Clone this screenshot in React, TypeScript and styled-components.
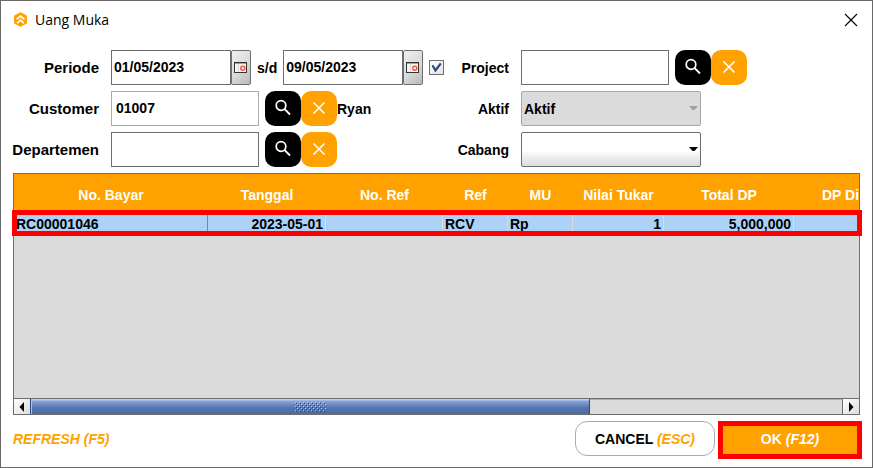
import React from "react";
import styled, { createGlobalStyle, css } from "styled-components";

const ORANGE = "#ffa200";
const RED = "#ff0000";
const LINE = "#6e6e6e";

const GlobalStyle = createGlobalStyle`
  *, *::before, *::after { box-sizing: border-box; }
  body {
    margin: 0;
    background: #fff;
    color: #000;
    font: bold 14px/18px "Liberation Sans", Arial, sans-serif;
  }
  button, input, select { font: inherit; color: inherit; margin: 0; }
`;

const Dialog = styled.main`
  min-height: 100vh;
  display: flex;
  flex-direction: column;
  border: 1px solid #696969;
  background: #fff;
`;

const TitleBar = styled.header`
  display: flex;
  align-items: center;
  gap: 7px;
  height: 37px;
  padding: 0 14px 0 12px;
`;

const Title = styled.h1`
  flex: 1;
  margin: 0;
  font: normal 14px/20px "Open Sans", "Noto Sans", sans-serif;
`;

const CloseButton = styled.button`
  display: flex;
  padding: 0;
  border: 0;
  background: none;
`;

const Filters = styled.form`
  display: grid;
  grid-template-columns: 86px 333px 53px 1fr;
  column-gap: 12px;
  row-gap: 6px;
  padding: 12px 12px 6px;
`;

const Label = styled.label<{ $large?: boolean }>`
  align-self: center;
  justify-self: end;
  white-space: nowrap;
  font-size: ${(p) => (p.$large ? "15px" : "14px")};
`;

const Fields = styled.div<{ $gap?: number }>`
  display: flex;
  align-items: center;
  height: 35px;
  gap: ${(p) => p.$gap ?? 0}px;
`;

const TextInput = styled.input<{ $muted?: boolean; $date?: boolean }>`
  width: ${(p) => (p.$date ? "120px" : "148px")};
  height: 35px;
  padding: 0 ${(p) => (p.$date ? "2px" : "4px")} 2px;
  border: 1px solid ${(p) => (p.$muted ? "#ababab" : LINE)};
  border-radius: 0;
  background: #fff;
  outline: 0;
`;

const DateField = styled.div`
  display: flex;
`;

const CalendarButton = styled.button`
  display: flex;
  align-items: center;
  justify-content: center;
  width: 20px;
  height: 35px;
  padding: 0;
  border: 1px solid ${LINE};
  border-radius: 2px;
  background: linear-gradient(135deg, #efefef, #d9d9d9 55%, #b9b9b9);
`;

const CheckWrap = styled.span`
  position: relative;
  display: flex;
  svg {
    position: absolute;
    inset: 0;
    pointer-events: none;
  }
`;

const CheckBox = styled.input`
  appearance: none;
  width: 15px;
  height: 15px;
  border: 1px solid ${LINE};
  background: linear-gradient(135deg, #fff, #e4e4e4);
  & + svg { visibility: hidden; }
  &:checked + svg { visibility: visible; }
`;

const ButtonPair = styled.div`
  display: flex;
  margin-left: 6px;
`;

const SquareButton = styled.button<{ $clear?: boolean }>`
  display: flex;
  align-items: center;
  justify-content: center;
  width: 36px;
  height: 35px;
  padding: 0 0 2px;
  border: 0;
  border-radius: 10px;
  background: ${(p) => (p.$clear ? ORANGE : "#000")};
`;

const SelectWrap = styled.div`
  position: relative;
  display: flex;
  svg {
    position: absolute;
    right: 3px;
    top: 15px;
    pointer-events: none;
  }
`;

const Select = styled.select`
  appearance: none;
  width: 180px;
  height: 35px;
  padding: 0 20px 0 2px;
  border: 1px solid ${LINE};
  border-radius: 2px;
  background: linear-gradient(#fff 55%, #f0f0f0 70%, #dcdcdc);
  opacity: 1;
  &:disabled {
    border-color: #a8a8a8;
    background: #dbdbdb;
    color: #000;
  }
`;

const GridArea = styled.section`
  position: relative;
  flex: 1;
  display: flex;
  margin: 0 12px;
`;

const GridPanel = styled.div`
  flex: 1;
  min-width: 0;
  display: flex;
  flex-direction: column;
  border: 1px solid ${LINE};
  background: #dbdbdb;
`;

const TableClip = styled.div`
  flex: 1;
  overflow: hidden;
`;

const Table = styled.table`
  width: 1000px;
  table-layout: fixed;
  border-collapse: separate;
  border-spacing: 0;
`;

const Column = styled.col<{ $width: number }>`
  width: ${(p) => p.$width}px;
`;

const HeadCell = styled.th<{ $start?: boolean }>`
  height: 38px;
  padding: 4px 0 0 ${(p) => (p.$start ? "28px" : "0")};
  background: ${ORANGE};
  color: #fff;
  text-align: ${(p) => (p.$start ? "left" : "center")};
`;

const Cell = styled.td<{ $right?: boolean; $first?: boolean }>`
  height: 22px;
  padding: 2px 2px 0;
  background: #acd2f7;
  text-align: ${(p) => (p.$right ? "right" : "left")};
  border-right: 1px solid ${(p) => (p.$first ? "#7a8794" : "#dbdbdb")};
`;

const RowMarker = styled.div`
  position: absolute;
  top: 37px;
  left: -1px;
  right: -2px;
  height: 26px;
  border: 5px solid ${RED};
  pointer-events: none;
`;

const ScrollBar = styled.div`
  display: flex;
  height: 16px;
  border-top: 1px solid ${LINE};
`;

const ScrollArrow = styled.button`
  display: flex;
  align-items: center;
  justify-content: center;
  width: 16px;
  padding: 0;
  border: 0;
  background: linear-gradient(135deg, #fff, #dcdcdc);
`;

const Track = styled.div`
  flex: 1;
  display: flex;
  border-top: 1px solid #b0b0b0;
  border-right: 1px solid ${LINE};
`;

const Thumb = styled.div`
  display: flex;
  align-items: center;
  justify-content: center;
  width: 69%;
  margin-top: -1px;
  border: solid #2d4a86;
  border-width: 0 1px;
  background: linear-gradient(#b9d0f2 0 1px, #8ba4d2 2px, #5474ae 60%, #4c6ba3);
  box-shadow: inset 1px 0 #a9c4ec;
`;

const Footer = styled.footer`
  display: flex;
  align-items: flex-start;
  gap: 3px;
  padding: 6px 10px 8px 12px;
`;

const action = css`
  height: 35px;
  padding: 0;
  white-space: pre;
`;

const RefreshButton = styled.button`
  ${action}
  margin-right: auto;
  border: 0;
  background: none;
  color: ${ORANGE};
  font-style: italic;
`;

const CancelButton = styled.button`
  ${action}
  width: 140px;
  border: 1px solid #ababab;
  border-radius: 12px;
  background: #fff;
  em { color: ${ORANGE}; }
`;

const OkButton = styled.button`
  ${action}
  width: 144px;
  height: 38px;
  padding-bottom: 2px;
  border: 5px solid ${RED};
  background: ${ORANGE};
  color: #fff;
`;

const Logo = () => (
  <svg width="15" height="15" viewBox="0 0 15 15" aria-hidden="true">
    <path d="M7.5 .8 13.3 4v7L7.5 14.2 1.7 11V4z" fill={ORANGE} stroke={ORANGE} strokeWidth="1.2" strokeLinejoin="round" />
    <path d="M3.5 7.2C5 6.4 6 5.3 7.5 4.2 9 5.3 10 6.4 11.5 7.2M4 11C5.4 10.2 6.2 9.2 7.5 8.2 8.8 9.2 9.6 10.2 11 11" fill="none" stroke="#fff" strokeWidth="1.5" />
  </svg>
);

const CloseIcon = () => (
  <svg width="14" height="14" viewBox="0 0 14 14" aria-hidden="true">
    <path d="M1 1 13 13M13 1 1 13" stroke="#000" strokeWidth="1.1" />
  </svg>
);

const SearchIcon = () => (
  <svg width="18" height="18" viewBox="0 0 18 18" fill="none" stroke="#fff" aria-hidden="true">
    <circle cx="7" cy="6.5" r="4.8" strokeWidth="1.7" />
    <path d="M10.4 9.9 16 15.5" strokeWidth="1.9" />
  </svg>
);

const ClearIcon = () => (
  <svg width="14" height="14" viewBox="0 0 14 14" aria-hidden="true">
    <path d="M1.5 1.5 12.5 12.5M12.5 1.5 1.5 12.5" stroke="#fff" strokeWidth="1.6" />
  </svg>
);

const CalendarIcon = () => (
  <svg width="14" height="12" viewBox="0 0 14 12" aria-hidden="true">
    <rect x=".5" y=".5" width="12" height="10" fill="#f8f4ec" stroke="#333" />
    <path d="M1 1.5h11" stroke="#8fa6bd" />
    <path d="M4.5 2v8" stroke="#d9d9d9" />
    <circle cx="8.8" cy="6.2" r="2" fill="#fff" stroke="#f0503c" strokeWidth="1.4" />
  </svg>
);

const CheckIcon = () => (
  <svg width="15" height="15" viewBox="0 0 15 15" aria-hidden="true">
    <path d="M3.4 5.2 6.5 10.4 11.8 3.3" fill="none" stroke="#2b4a85" strokeWidth="2.2" />
  </svg>
);

const Caret = ({ color }: { color: string }) => (
  <svg width="9" height="5" viewBox="0 0 9 5" aria-hidden="true">
    <path d="M0 0h9L5.5 4h-2z" fill={color} />
  </svg>
);

const Arrow = ({ right }: { right?: boolean }) => (
  <svg width="6" height="10" viewBox="0 0 6 10" aria-hidden="true">
    <path d={right ? "M1 0v10L5.5 5z" : "M5 0v10L.5 5z"} fill="#000" />
  </svg>
);

const Grip = () => (
  <svg width="31" height="10" viewBox="0 0 31 10" aria-hidden="true">
    <defs>
      <pattern id="grip" width="4" height="4" patternUnits="userSpaceOnUse">
        <path d="M0 0h1v1H0zM2 2h1v1H2z" fill="#b7cdf0" />
        <path d="M1 1h1v1H1zM3 3h1v1H3z" fill="#2d4a86" />
      </pattern>
    </defs>
    <rect width="31" height="10" fill="url(#grip)" />
  </svg>
);

const LookupButtons = ({ name }: { name: string }) => (
  <ButtonPair>
    <SquareButton type="button" aria-label={`Search ${name}`}><SearchIcon /></SquareButton>
    <SquareButton type="button" $clear aria-label={`Clear ${name}`}><ClearIcon /></SquareButton>
  </ButtonPair>
);

const DateInput = ({ id, value, label }: { id: string; value: string; label: string }) => (
  <DateField>
    <TextInput id={id} $date defaultValue={value} aria-label={label} />
    <CalendarButton type="button" aria-label={`${label} calendar`}><CalendarIcon /></CalendarButton>
  </DateField>
);

const columns = [
  { title: "No. Bayar", width: 194, value: "RC00001046" },
  { title: "Tanggal", width: 118, value: "2023-05-01", right: true },
  { title: "No. Ref", width: 117, value: "" },
  { title: "Ref", width: 65, value: "RCV" },
  { title: "MU", width: 65, value: "Rp" },
  { title: "Nilai Tukar", width: 91, value: "1", right: true },
  { title: "Total DP", width: 130, value: "5,000,000", right: true },
  { title: "DP Di", width: 220, value: "", start: true },
];

export default function App() {
  return (
    <>
      <GlobalStyle />
      <Dialog>
        <TitleBar>
          <Logo />
          <Title>Uang Muka</Title>
          <CloseButton aria-label="Close"><CloseIcon /></CloseButton>
        </TitleBar>

        <Filters>
          <Label $large htmlFor="from">Periode</Label>
          <Fields $gap={6}>
            <DateInput id="from" value="01/05/2023" label="Periode" />
            <label htmlFor="to">s/d</label>
            <DateInput id="to" value="09/05/2023" label="s/d" />
            <CheckWrap>
              <CheckBox type="checkbox" defaultChecked aria-label="Periode aktif" />
              <CheckIcon />
            </CheckWrap>
          </Fields>
          <Label htmlFor="project">Project</Label>
          <Fields>
            <TextInput id="project" />
            <LookupButtons name="Project" />
          </Fields>

          <Label $large htmlFor="customer">Customer</Label>
          <Fields>
            <TextInput id="customer" $muted defaultValue="01007" />
            <LookupButtons name="Customer" />
            <span>Ryan</span>
          </Fields>
          <Label htmlFor="aktif">Aktif</Label>
          <Fields>
            <SelectWrap>
              <Select id="aktif" disabled><option>Aktif</option></Select>
              <Caret color="#a0a0a0" />
            </SelectWrap>
          </Fields>

          <Label $large htmlFor="departemen">Departemen</Label>
          <Fields>
            <TextInput id="departemen" />
            <LookupButtons name="Departemen" />
          </Fields>
          <Label htmlFor="cabang">Cabang</Label>
          <Fields>
            <SelectWrap>
              <Select id="cabang"><option></option></Select>
              <Caret color="#000" />
            </SelectWrap>
          </Fields>
        </Filters>

        <GridArea>
          <GridPanel>
            <TableClip>
              <Table>
                <colgroup>
                  {columns.map((c) => <Column key={c.title} $width={c.width} />)}
                </colgroup>
                <thead>
                  <tr>
                    {columns.map((c) => <HeadCell key={c.title} $start={c.start}>{c.title}</HeadCell>)}
                  </tr>
                </thead>
                <tbody>
                  <tr>
                    {columns.map((c, i) => (
                      <Cell key={c.title} $right={c.right} $first={i === 0}>{c.value}</Cell>
                    ))}
                  </tr>
                </tbody>
              </Table>
            </TableClip>
            <ScrollBar>
              <ScrollArrow aria-label="Scroll left"><Arrow /></ScrollArrow>
              <Track><Thumb><Grip /></Thumb></Track>
              <ScrollArrow aria-label="Scroll right"><Arrow right /></ScrollArrow>
            </ScrollBar>
          </GridPanel>
          <RowMarker />
        </GridArea>

        <Footer>
          <RefreshButton>REFRESH (F5)</RefreshButton>
          <CancelButton>CANCEL <em>(ESC)</em></CancelButton>
          <OkButton>OK <em>(F12)</em></OkButton>
        </Footer>
      </Dialog>
    </>
  );
}
